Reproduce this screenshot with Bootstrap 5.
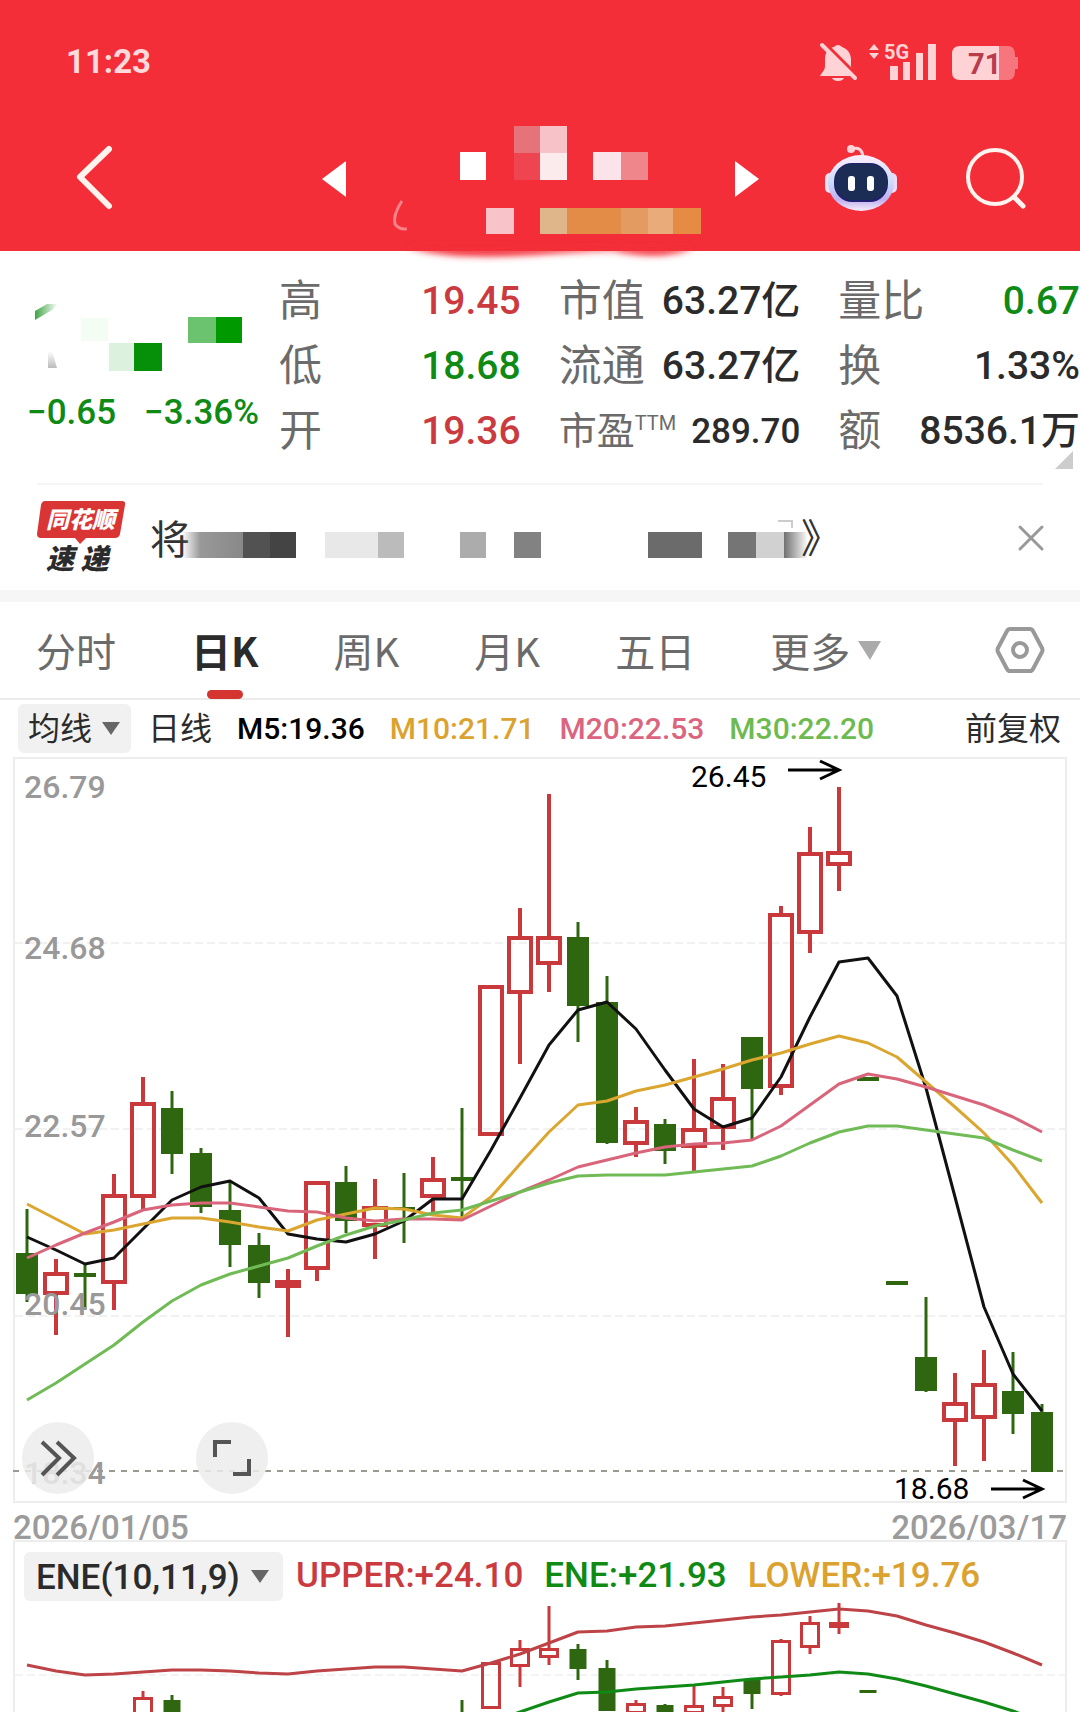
<!DOCTYPE html>
<html lang="zh-CN">
<head>
<meta charset="utf-8">
<meta name="viewport" content="width=device-width, initial-scale=1">
<title>日K</title>
<link rel="stylesheet" href="https://cdn.jsdelivr.net/npm/bootstrap@5.3.0/dist/css/bootstrap.min.css">
<style>
  :root { --brand:#f32e38; --up:#cb3a3e; --down:#0f8a14; --ink:#2b2b2b; --dim:#6b6b6b; }
  body { font-family: Roboto, "Noto Sans CJK SC", sans-serif; color: var(--ink); background:#fff; overflow-x:hidden; }
  svg { display:block; overflow:visible; }
  button { border:0; background:none; padding:0; color:inherit; display:block; }
  .topbar { background:var(--brand); height:251px; }
  .statusline { height:124px; padding:0 62px 0 66px; color:#ffd9dc; font-size:33px; font-weight:700; }
  .titleline { height:110px; }
  .side-l { flex:0 0 322px; padding-left:76px; }
  .side-r { flex:0 0 321px; padding:0 54px 0 66px; }
  .quote { padding:18px 0 0 27px; height:232px; }
  .price-box { flex:0 0 252px; }
  .change { font-size:35px; line-height:40px; font-weight:500; color:var(--down); gap:28px; }
  .stats { display:grid; grid-template-columns:241fr 241fr 241fr; column-gap:38px; grid-auto-rows:65px; }
  .stats > div { display:flex; justify-content:space-between; align-items:center; font-size:39px; line-height:65px; font-weight:500; white-space:nowrap; }
  .stats dt { font-size:43px; font-weight:400; color:var(--dim); }
  .stats dd { margin:0; }
  .stats .tight dt { font-size:38px; }
  .stats .tight dd { font-size:35px; }
  .stats sup { font-size:20px; font-weight:400; top:-14px; }
  .up { color:var(--up); } .down { color:var(--down); }
  .more-corner { position:absolute; right:7px; top:200px; }
  .news { margin:0 37px; height:107px; border-top:2px solid #f5f5f5; }
  .brand-tag { font-weight:900; font-style:italic; }
  .band { height:12px; background:#f6f6f6; }
  .tabs { height:98px; padding:0 36px; border-bottom:2px solid #ebebeb; font-size:40px; color:var(--dim); }
  .tabs .tab-set { gap:75px; }
  .tabs button { height:96px; line-height:96px; position:relative; white-space:nowrap; }
  .tabs .current { color:var(--ink); font-weight:700; }
  .tabs .current::after { content:""; position:absolute; left:50%; bottom:-1px; width:36px; height:9px; margin-left:-18px; border-radius:5px; background:#d43530; }
  .cjk { font-family:"Noto Sans CJK SC", sans-serif; }
  .averages { height:57px; padding:0 19px 0 18px; font-size:30px; font-weight:500; gap:25px; white-space:nowrap; }
  .averages .cn { font-size:32px; font-weight:400; }
  .picker { position:relative; background:#f1f1f1; border-radius:6px; }
  .picker select { appearance:none; border:0; background:transparent; color:var(--ink); height:49px; padding:0 0 0 10px; display:block; font-family:inherit; }
  .picker svg { position:absolute; right:11px; top:18px; pointer-events:none; }
  .picker-a { margin-right:-8px; } .picker-a select { font-size:32px; width:113px; }
  .picker-b select { font-size:35px; font-weight:500; width:259px; padding-left:12px; }
  .picker-b svg { right:14px; }
  .panels { padding:0 13px; }
  .panel { border:2px solid #ededed; position:relative; }
  .panel svg.plot { width:100%; height:auto; }
  .panel-b { border-bottom:0; overflow:hidden; }
  .dates { height:37px; padding-top:6px; font-size:33px; font-weight:500; line-height:38px; color:#9b9b9b; }
  .m10 { color:#dba22f; } .m20 { color:#db657f; } .m30 { color:#6dbb50; }
  .ene { padding:9px 9px 0; height:59px; font-size:35px; gap:21px; font-weight:500; white-space:nowrap; }
  .ene .picker { margin-right:-8px; }
  .floaters { position:absolute; left:7px; bottom:7px; gap:102px; }
  .floaters button { width:72px; height:72px; border-radius:50%; background:rgba(236,236,236,.84); }
  .axis { font:500 32px Roboto, sans-serif; fill:#999; }
  .peak { font:400 30px Roboto, sans-serif; fill:#000; }
</style>
<script src="https://cdn.jsdelivr.net/npm/bootstrap@5.3.0/dist/js/bootstrap.bundle.min.js"></script>
</head>
<body>
<header class="topbar">
  <div class="statusline d-flex justify-content-between align-items-center">
    <span>11:23</span>
    <svg width="200" height="44" viewBox="818 40 200 44" fill="#ffd3d6" aria-hidden="true">
      <path d="M838 45c2 0 3 1 4 2 6 2 9 7 9 13v7l6 9h-37c1-3 5-5 5-10v-7c0-6 3-11 9-12 1-1 2-2 4-2zM832 78h12c-1 2-3 3-6 3s-5-1-6-3z"/>
      <path d="M824 43l36 36" stroke="#f32e38" stroke-width="4"/><path d="M822 45l33 33" stroke="#ffd3d6" stroke-width="4" stroke-linecap="round"/>
      <path d="M874 44l5 6h-10zM869 53h10l-5 6z"/>
      <text x="884" y="59" font-family="Roboto, sans-serif" font-size="20" font-weight="700">5G</text>
      <rect x="890" y="66" width="8" height="14"/><rect x="903" y="62" width="7" height="18"/><rect x="916" y="53" width="7" height="27"/><rect x="928" y="44" width="8" height="36"/>
      <path d="M999 46h9q7 0 7 9v2h3v12h-3v2q0 9-7 9h-9z" fill="#f7767d"/>
      <path d="M960 46h39v34h-39q-8 0-8-8v-18q0-8 8-8z"/>
      <text x="968" y="74" font-family="Roboto, sans-serif" font-size="29" font-weight="700" fill="#b93c4c">71</text>
    </svg>
  </div>
  <div class="titleline d-flex align-items-center">
    <div class="side-l"><button type="button" aria-label="返回"><svg width="38" height="66" viewBox="0 0 38 66" fill="none" stroke="#fff3ee" stroke-width="6" stroke-linecap="round" stroke-linejoin="round"><path d="M33 3L4 31l29 29"/></svg></button></div>
    <button type="button" aria-label="上一只"><svg width="24" height="36" viewBox="0 0 24 36" fill="#fff"><path d="M0 18L24 0v36z"/></svg></button>
    <div class="flex-grow-1">
      <svg width="100%" height="108" viewBox="346 125 390 108" aria-hidden="true">
        <defs><filter id="soft" x="-10%" y="-100%" width="120%" height="300%"><feGaussianBlur stdDeviation="3"/></filter></defs>
        <path d="M407 247q40 14 130 8t80-3q50 9 78-4z" fill="#f32e38" filter="url(#soft)"/>
        <path d="M402 201q-9 14-7 23 4 6 12 5" fill="none" stroke="#f78289" stroke-width="3"/>
        <g shape-rendering="crispEdges">
          <path fill="#fff" d="M460 152h26v28h-26z"/><path fill="#e67379" d="M514 126h26v27h-26z"/><path fill="#ef4550" d="M514 153h26v27h-26z"/>
          <path fill="#f8c3c8" d="M540 126h28v27h-28z"/><path fill="#fcebed" d="M540 153h28v27h-28z"/><path fill="#fbe4e9" d="M594 152h28v28h-28z"/><path fill="#ef868c" d="M622 152h27v28h-27z"/>
          <path fill="#f9c4c9" d="M486 208h28v26h-28z"/><path fill="#dfb689" d="M540 208h28v26h-28z"/><path fill="#e38c48" d="M568 208h54v26h-54z"/><path fill="#e49b61" d="M622 208h27v26h-27z"/><path fill="#e9ab79" d="M649 208h25v26h-25z"/><path fill="#e68b44" d="M674 208h28v26h-28z"/>
        </g>
      </svg>
    </div>
    <button type="button" aria-label="下一只"><svg width="24" height="36" viewBox="0 0 24 36" fill="#fff"><path d="M24 18L0 0v36z"/></svg></button>
    <div class="side-r d-flex justify-content-between align-items-center">
      <button type="button" aria-label="智能助手">
        <svg width="72" height="68" viewBox="0 0 72 68">
          <defs><linearGradient id="shell" x1="0" y1="0" x2="0" y2="1"><stop offset="0" stop-color="#fdeefb"/><stop offset=".5" stop-color="#c9dcf8"/><stop offset=".8" stop-color="#c0b0ee"/><stop offset="1" stop-color="#f8eefb"/></linearGradient></defs>
          <path d="M27 4q10-3 11 8" fill="none" stroke="#ffd3d9" stroke-width="3"/><circle cx="26" cy="4" r="4" fill="#ffd3d9"/>
          <rect x="0" y="28" width="12" height="20" rx="5" fill="#f6dff0"/><rect x="60" y="28" width="12" height="20" rx="5" fill="#eed9f6"/>
          <ellipse cx="36" cy="38" rx="33" ry="28" fill="url(#shell)"/>
          <rect x="9" y="18" width="54" height="39" rx="18" fill="#211f70"/><rect x="10" y="19" width="52" height="36" rx="17" fill="#1c2d55"/>
          <rect x="23" y="31" width="7" height="15" rx="3" fill="#fff"/><rect x="42" y="31" width="7" height="15" rx="3" fill="#fff"/>
        </svg>
      </button>
      <button type="button" aria-label="搜索"><svg width="60" height="60" viewBox="0 0 60 60" fill="none" stroke="#fff3ee" stroke-width="4"><circle cx="29" cy="28" r="27"/><path d="M48 48l9 9" stroke-width="5" stroke-linecap="round"/></svg></button>
    </div>
  </div>
</header>

<main>
  <section class="quote d-flex position-relative">
    <div class="price-box">
      <svg width="232" height="124" viewBox="27 268 232 124" aria-hidden="true">
        <defs><linearGradient id="fade"><stop offset="0" stop-color="#3fa544"/><stop offset="1" stop-color="#fff"/></linearGradient><linearGradient id="ash" y1="0" y2="1" x2="0"><stop offset="0" stop-color="#fff"/><stop offset="1" stop-color="#bbb"/></linearGradient></defs>
        <path d="M35 310l12-7h11l-6 6-17 10z" fill="url(#fade)"/><path d="M48 350h4l5 17h-9z" fill="url(#ash)"/>
        <path fill="#f3fdf3" d="M81 317h27v23H81z"/><path fill="#6bc36f" d="M188 316h28v26h-28z"/><path fill="#009a00" d="M216 316h26v26h-26z"/><path fill="#dcf2de" d="M109 342h25v28h-25z"/><path fill="#068f08" d="M134 342h28v28h-28z"/>
      </svg>
      <div class="change d-flex"><span>−0.65</span><span>−3.36%</span></div>
    </div>
    <dl class="stats flex-grow-1 mb-0">
      <div><dt>高</dt><dd class="up">19.45</dd></div>
      <div><dt>市值</dt><dd>63.27亿</dd></div>
      <div><dt>量比</dt><dd class="down">0.67</dd></div>
      <div><dt>低</dt><dd class="down">18.68</dd></div>
      <div><dt>流通</dt><dd>63.27亿</dd></div>
      <div><dt>换</dt><dd>1.33%</dd></div>
      <div><dt>开</dt><dd class="up">19.36</dd></div>
      <div class="tight"><dt>市盈<sup>TTM</sup></dt><dd>289.70</dd></div>
      <div><dt>额</dt><dd>8536.1万</dd></div>
    </dl>
    <svg class="more-corner" width="18" height="18" viewBox="0 0 18 18" fill="#ccc"><path d="M18 0v18H0z"/></svg>
  </section>

  <section class="news d-flex align-items-center">
    <svg class="brand-tag cjk flex-shrink-0" width="90" height="74" viewBox="37 501 90 74">
      <path d="M45 501h77q4 0 3 4l-5 29q-1 4-5 4H86l-6 6-5-6H41q-4 0-4-4l4-29q1-4 4-4z" fill="#d93535"/>
      <text x="46" y="528" font-size="23" fill="#fff">同花顺</text><text x="46" y="569" font-size="28" fill="#2b2b2b">速 递</text>
    </svg>
    <svg class="cjk flex-shrink-0 ms-4" width="680" height="60" viewBox="151 508 680 60" font-size="40" fill="#333">
      <defs><linearGradient id="g1"><stop offset="0" stop-color="#999" stop-opacity="0"/><stop offset=".3" stop-color="#999"/><stop offset="1" stop-color="#888"/></linearGradient><linearGradient id="g2"><stop offset="0" stop-color="#707070"/><stop offset="1" stop-color="#fff"/></linearGradient></defs>
      <text x="150" y="554">将</text>
      <path d="M182 532h61v26h-61z" fill="url(#g1)"/><path fill="#525252" d="M243 532h27v26h-27z"/><path fill="#444" d="M270 532h26v26h-26z"/><path fill="#e8e8e8" d="M325 532h53v26h-53z"/><path fill="#bbb" d="M378 532h26v26h-26z"/><path fill="#acacac" d="M460 532h26v26h-26z"/><path fill="#828282" d="M514 532h27v26h-27z"/><path fill="#6b6b6b" d="M648 532h54v26h-54z"/><path fill="#757575" d="M728 532h28v26h-28z"/><path fill="#d1d1d1" d="M756 532h28v26h-28z"/><path fill="url(#g2)" d="M784 532h24v26h-24z"/>
      <path d="M778 521h14v7" fill="none" stroke="#ccc" stroke-width="2"/>
      <text x="801" y="553">》</text>
    </svg>
    <button type="button" class="ms-auto" aria-label="关闭"><svg width="24" height="24" viewBox="0 0 24 24" stroke="#999" stroke-width="3" stroke-linecap="round"><path d="M1 1l22 22M23 1L1 23"/></svg></button>
  </section>
  <div class="band"></div>

  <nav class="tabs cjk d-flex justify-content-between align-items-center">
    <div class="tab-set d-flex">
      <button type="button">分时</button><button type="button" class="current">日K</button><button type="button">周K</button><button type="button">月K</button><button type="button">五日</button>
      <button type="button" class="d-flex align-items-center">更多<svg class="ms-2" width="23" height="19" viewBox="0 0 23 19" fill="#aaa"><path d="M0 0h23L12 19z"/></svg></button>
    </div>
    <button type="button" class="d-flex align-items-center" aria-label="设置"><svg width="48" height="48" viewBox="0 0 48 48" fill="none" stroke="#999" stroke-width="4" stroke-linejoin="round"><path d="M14 3h20q2 0 3 2l9 17q1 2 0 4l-9 17q-1 2-3 2H14q-2 0-3-2L2 26q-1-2 0-4L11 5q1-2 3-2z"/><circle cx="24" cy="24" r="7"/></svg></button>
  </nav>

  <div class="averages d-flex align-items-center">
    <div class="picker picker-a"><select class="cjk" aria-label="主图指标"><option>均线</option></select><svg width="18" height="13" viewBox="0 0 18 13" fill="#666"><path d="M0 0h18L9 13z"/></svg></div>
    <span class="cn">日线</span><span class="text-black">M5:19.36</span><span class="m10">M10:21.71</span><span class="m20">M20:22.53</span><span class="m30">M30:22.20</span>
    <span class="cn ms-auto">前复权</span>
  </div>

  <section class="panels">
    <div class="panel">
      <svg class="plot" id="kline" viewBox="15 759 1050 742" role="img" aria-label="日K线图">
        <g stroke="#f1f1f1" stroke-width="2" stroke-dasharray="8 4"><path d="M15 943h1050M15 1129h1050M15 1316h1050"/></g>
        <path d="M13 1471h1054" stroke="#9a9a90" stroke-width="2" stroke-dasharray="6 6"/>
        <g class="candles"></g><g class="curves" fill="none" stroke-width="3" stroke-linejoin="round"></g>
        <g class="axis"><text x="24" y="798">26.79</text><text x="24" y="959">24.68</text><text x="24" y="1137">22.57</text><text x="24" y="1315">20.45</text><text x="24" y="1484">18.34</text></g>
        <g class="peak"><text x="691" y="787">26.45</text><text x="894" y="1499">18.68</text></g>
        <path d="M788 770h50M820 761l19 9-19 9M991 1489h50M1023 1480l19 9-19 9" fill="none" stroke="#000" stroke-width="3"/>
      </svg>
      <div class="floaters d-flex">
        <button type="button" aria-label="展开"><svg width="72" height="72" viewBox="0 0 72 72" fill="none" stroke="#555" stroke-width="4"><path d="M20 20l17 16-17 17M35 20l17 16-17 17"/></svg></button>
        <button type="button" aria-label="全屏"><svg width="72" height="72" viewBox="0 0 72 72" fill="none" stroke="#555" stroke-width="4"><path d="M19 35V20h16M53 37v15H37"/></svg></button>
      </div>
    </div>
    <div class="dates d-flex justify-content-between"><span>2026/01/05</span><span>2026/03/17</span></div>
    <div class="panel panel-b">
      <div class="ene d-flex align-items-center">
        <div class="picker picker-b"><select aria-label="副图指标"><option>ENE(10,11,9)</option></select><svg width="18" height="13" viewBox="0 0 18 13" fill="#666"><path d="M0 0h18L9 13z"/></svg></div>
        <span class="up">UPPER:+24.10</span><span class="down">ENE:+21.93</span><span class="m10">LOWER:+19.76</span>
      </div>
      <svg class="plot" id="ene" viewBox="15 1601 1050 111" role="img" aria-label="ENE 轨道线">
        <path d="M15 1675h1050" stroke="#f3f3f3" stroke-width="2" stroke-dasharray="8 4"/>
        <g class="candles"></g><g class="curves" fill="none" stroke-width="3" stroke-linejoin="round"></g>
      </svg>
    </div>
  </section>
</main>
<script>
  // Each candle: [index, rising?, high, body top, body bottom, low]
  const daily = [
    [0,0,1209,1253,1294,1302],[1,1,1259,1272,1295,1335],[2,0,1264,1273,1277,1309],[3,1,1174,1194,1284,1310],[4,1,1077,1102,1198,1209],[5,0,1091,1108,1154,1174],
    [6,0,1148,1153,1207,1213],[7,0,1181,1210,1245,1267],[8,0,1233,1245,1283,1298],[9,1,1269,1280,1288,1337],[10,1,1181,1181,1270,1281],[11,0,1166,1182,1221,1233],
    [12,1,1179,1206,1227,1259],[13,0,1173,1207,1210,1243],[14,1,1157,1178,1198,1212],[15,0,1108,1177,1181,1221],[16,1,985,985,1136,1136],[17,1,908,936,994,1064],
    [18,1,794,936,965,992],[19,0,922,937,1006,1042],[20,0,976,1002,1143,1144],[21,1,1107,1120,1145,1157],[22,0,1119,1124,1151,1164],[23,1,1059,1128,1148,1171],
    [24,1,1064,1097,1129,1150],[25,0,1037,1037,1089,1139],[26,1,906,913,1088,1095],[27,1,827,852,934,953],[28,1,787,851,866,891],[29,0,1077,1077,1081,1081],
    [30,0,1281,1281,1285,1285],[31,0,1297,1357,1391,1392],[32,1,1373,1402,1422,1466],[33,1,1350,1383,1419,1461],[34,0,1352,1391,1414,1434],[35,0,1404,1412,1472,1472]];
  const envelope = [
    [4,1,1691,1697,1740,1740],[5,0,1695,1700,1730,1730],[15,0,1700,1725,1728,1740],[16,1,1662,1662,1709,1709],[17,1,1640,1648,1667,1687],[18,1,1606,1648,1658,1665],
    [19,0,1644,1649,1669,1680],[20,0,1660,1668,1711,1711],[21,1,1700,1703,1714,1720],[22,0,1704,1705,1716,1720],[23,1,1685,1705,1714,1720],[24,1,1687,1696,1707,1712],
    [25,0,1680,1680,1694,1709],[26,1,1639,1640,1695,1696],[27,1,1616,1622,1648,1654],[28,1,1603,1622,1628,1634],[29,0,1690,1690,1693,1693]];
  const dailyCurves = {
    '#111': [0,[1237,1250,1264,1258,1229,1200,1187,1181,1198,1234,1239,1242,1234,1221,1199,1199,1150,1098,1045,1010,1002,1029,1070,1109,1127,1118,1077,1017,962,958,996,1088,1197,1307,1374,1411]],
    '#dba62f': [0,[1204,1219,1234,1230,1224,1218,1218,1222,1227,1231,1220,1214,1208,1209,1215,1218,1197,1164,1132,1105,1101,1091,1085,1077,1069,1060,1053,1044,1036,1043,1057,1082,1107,1133,1165,1203]],
    '#d9657b': [0,[1258,1245,1233,1222,1210,1205,1203,1203,1207,1211,1212,1218,1221,1219,1219,1220,1206,1192,1180,1167,1160,1153,1147,1144,1143,1140,1126,1105,1084,1074,1079,1087,1096,1105,1117,1132]],
    '#70bb56': [0,[1400,1383,1364,1345,1322,1301,1285,1274,1266,1258,1246,1235,1226,1220,1213,1210,1201,1192,1183,1176,1175,1175,1175,1172,1169,1166,1156,1143,1132,1126,1126,1130,1134,1138,1150,1161]]
  };
  const eneCurves = {
    '#bd4347': [0,[1665,1671,1675,1674,1672,1670,1670,1671,1673,1674,1671,1669,1667,1667,1669,1671,1663,1654,1643,1632,1631,1627,1626,1623,1620,1617,1615,1612,1609,1611,1616,1625,1633,1642,1653,1665]],
    '#0f8a14': [16,[1722,1712,1702,1693,1692,1689,1687,1685,1682,1679,1677,1675,1672,1674,1679,1686,1694,1702,1711,1722]]
  };
  const px = i => 27 + 29 * i;
  function draw(id, candles, curves, w, line) {
    const root = document.getElementById(id);
    root.querySelector('.candles').innerHTML = candles.map(([i, up, hi, top, bot, lo]) => {
      const x = px(i), c = up ? '#c9393c' : '#2f6610', half = w / 2, in_ = line / 2;
      if (!up) return `<g fill="${c}"><path d="M${x-1.5} ${hi}h3V${lo}h-3z"/><path d="M${x-half+1} ${top}h${w-2}V${bot}h${2-w}z"/></g>`;
      return `<g fill="none" stroke="${c}" stroke-width="${line}"><path d="M${x} ${hi}V${top}M${x} ${bot}V${lo}"/><path d="M${x-half+1} ${top+in_}h${w-2}V${bot-in_}h${2-w}z"/></g>`;
    }).join('');
    root.querySelector('.curves').innerHTML = Object.entries(curves).map(([c, [from, ys]]) =>
      `<polyline stroke="${c}" points="${ys.map((y, k) => px(from + k) + ',' + y).join(' ')}"/>`).join('');
  }
  draw('kline', daily, dailyCurves, 24, 4);
  draw('ene', envelope, eneCurves, 19, 3);
</script>
</body>
</html>
